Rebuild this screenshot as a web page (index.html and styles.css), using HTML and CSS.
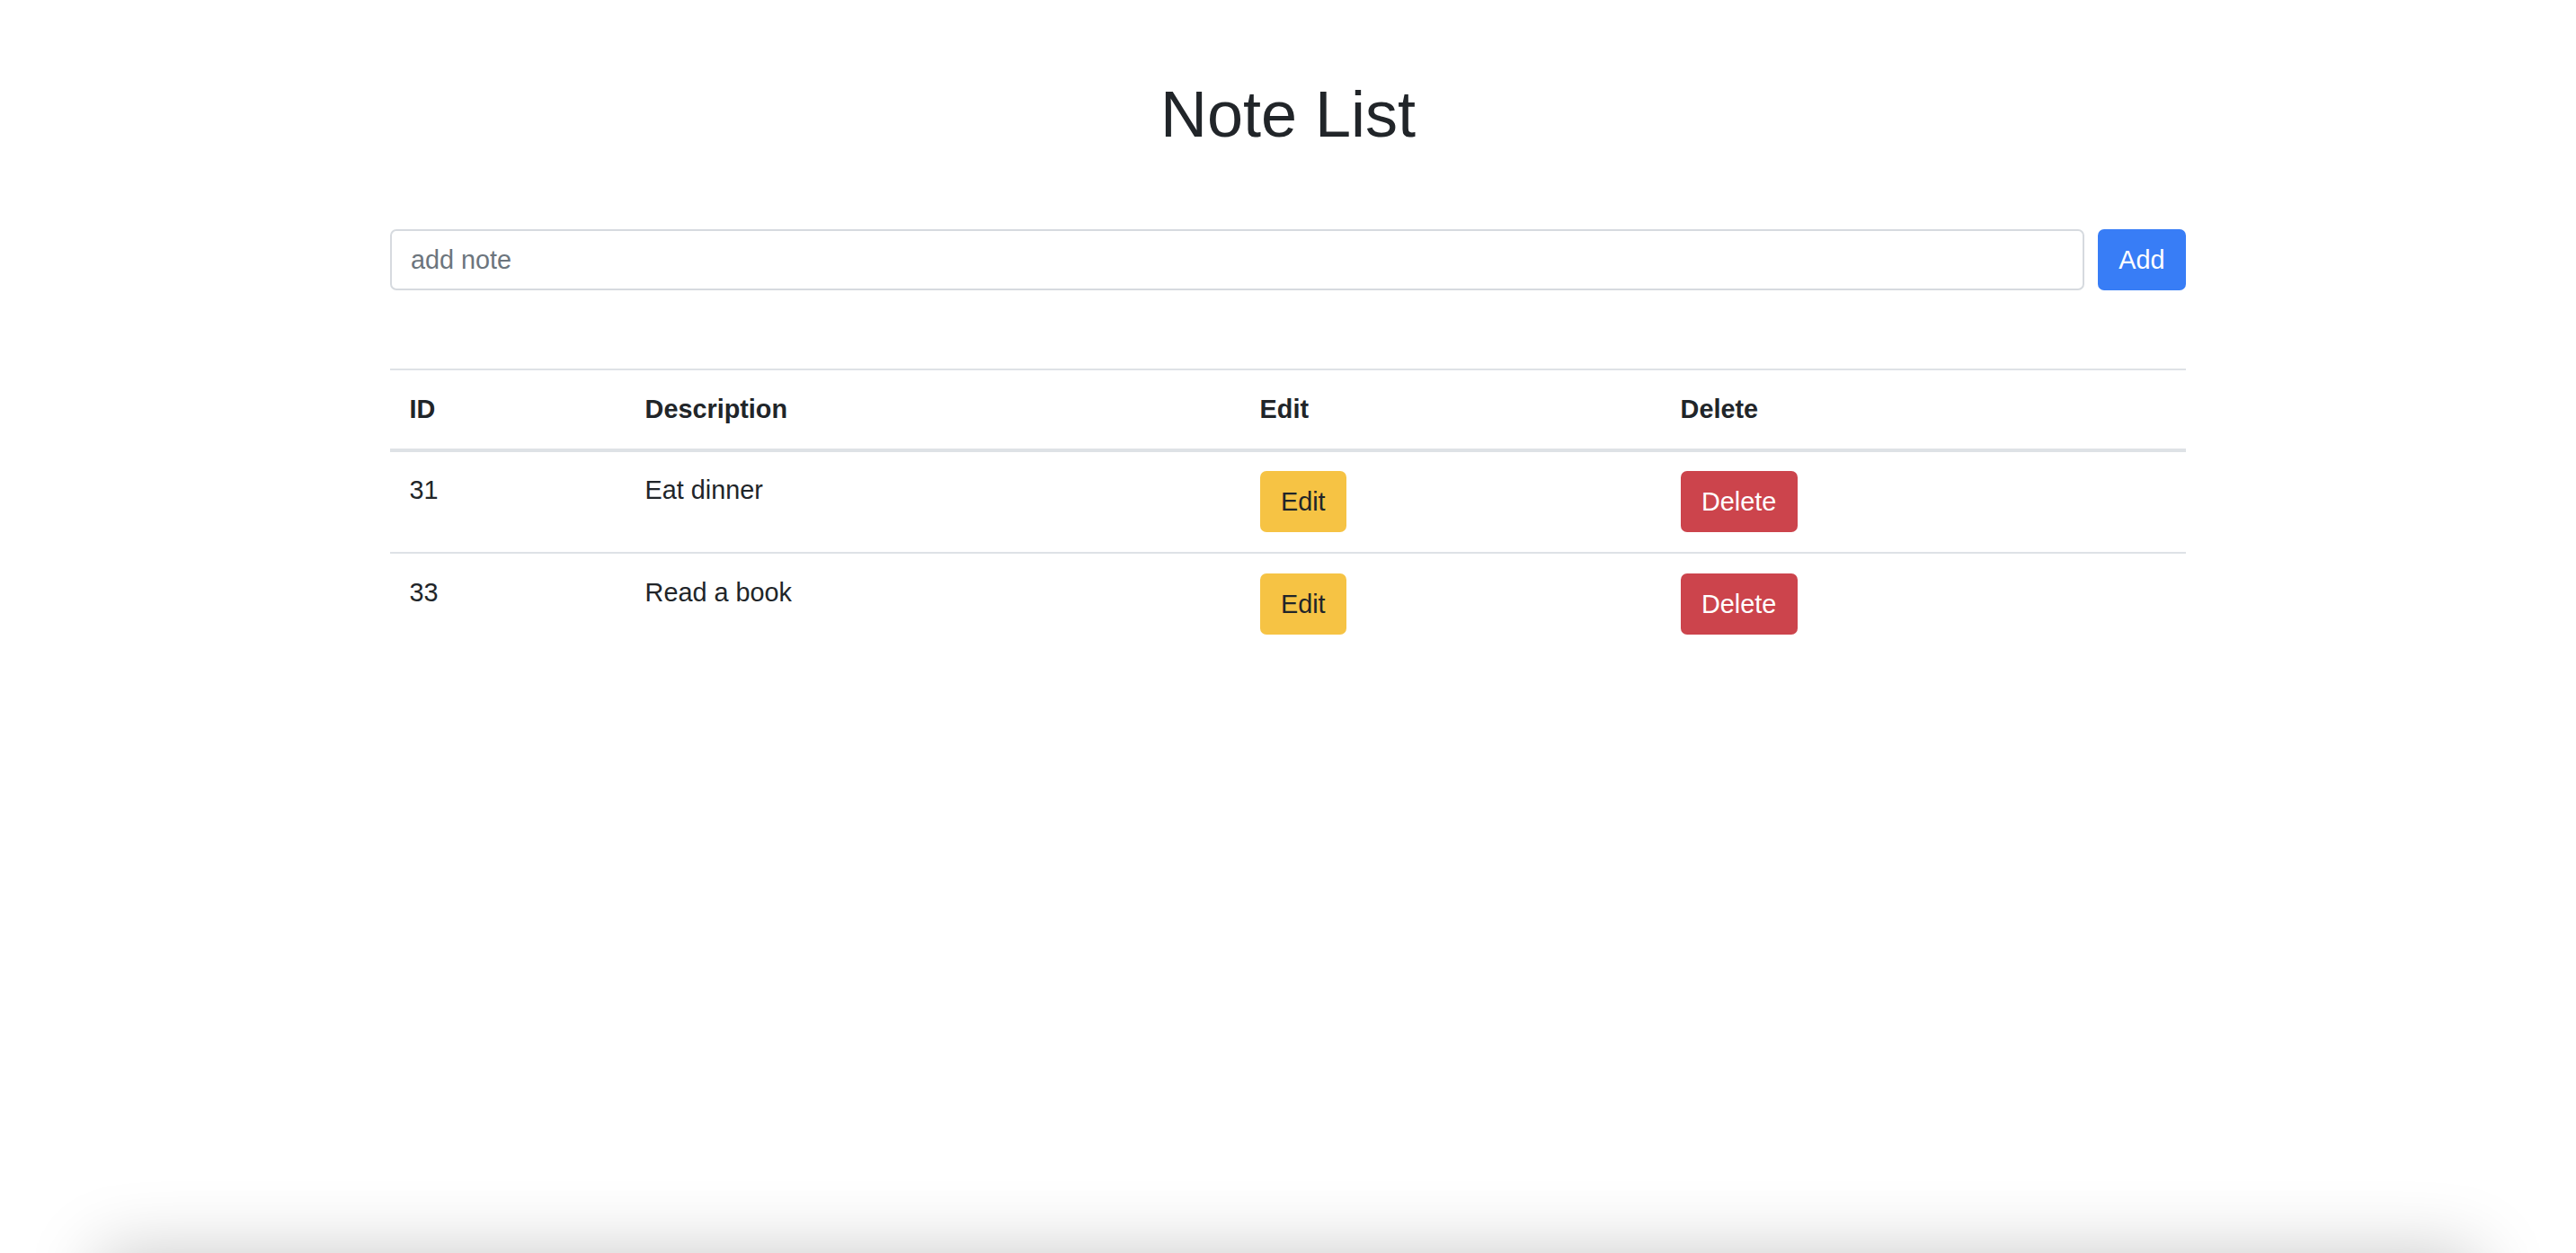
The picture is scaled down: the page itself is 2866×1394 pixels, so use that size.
FILE: index.html
```html
<!DOCTYPE html>
<html lang="en">
<head>
<meta charset="utf-8">
<title>Note List</title>
<link rel="stylesheet" href="styles.css">
</head>
<body>
<div class="page">
  <main class="container">
    <h1 class="title">Note List</h1>
    <form class="add-form">
      <input class="note-input" type="text" placeholder="add note">
      <button class="btn btn-primary" type="button">Add</button>
    </form>
    <table class="notes">
      <colgroup>
        <col class="col-id">
        <col class="col-desc">
        <col class="col-edit">
        <col class="col-del">
      </colgroup>
      <thead>
        <tr><th>ID</th><th>Description</th><th>Edit</th><th>Delete</th></tr>
      </thead>
      <tbody>
        <tr>
          <td>31</td>
          <td>Eat dinner</td>
          <td><button class="btn btn-warning" type="button">Edit</button></td>
          <td><button class="btn btn-danger" type="button">Delete</button></td>
        </tr>
        <tr>
          <td>33</td>
          <td>Read a book</td>
          <td><button class="btn btn-warning" type="button">Edit</button></td>
          <td><button class="btn btn-danger" type="button">Delete</button></td>
        </tr>
      </tbody>
    </table>
  </main>
</div>
<footer class="below-fold"></footer>
</body>
</html>
```

FILE: styles.css
```css
html, body {
  margin: 0;
  padding: 0;
  background: #ffffff;
}

body {
  font-family: "Liberation Sans", Arial, sans-serif;
  font-size: 28.8px;
  line-height: 1.5;
  color: #212529;
}

.page {
  min-height: 1394px;
}

.container {
  width: 1998px;
  margin: 0 auto;
  padding-top: 84px;
}

.title {
  margin: 0;
  font-size: 72px;
  line-height: 86.4px;
  font-weight: 400;
  text-align: center;
  color: #212529;
}

.add-form {
  display: flex;
  gap: 15px;
  margin: 85px 0 0;
}

.note-input {
  flex: 1;
  box-sizing: border-box;
  height: 68px;
  margin: 0;
  padding: 0 21px;
  border: 2px solid #d6dadf;
  border-radius: 7px;
  font-family: inherit;
  font-size: 28.8px;
  color: #495057;
  background: #fff;
  outline: none;
}

.note-input::placeholder {
  color: #6c757d;
  opacity: 1;
}

.btn {
  box-sizing: border-box;
  display: inline-block;
  height: 68px;
  margin: 0;
  padding: 0 23.4px;
  border: none;
  border-radius: 7px;
  font-family: inherit;
  font-size: 28.8px;
  line-height: 68px;
  vertical-align: top;
  cursor: pointer;
}

.btn-primary {
  background: #387df6;
  color: #ffffff;
}

.btn-warning {
  background: #f6c344;
  color: #212529;
}

.btn-danger {
  background: #cc444c;
  color: #ffffff;
}

.notes {
  width: 100%;
  margin-top: 87px;
  border-collapse: collapse;
  table-layout: fixed;
}

.col-id { width: 262px; }
.col-desc { width: 684px; }
.col-edit { width: 468px; }
.col-del { width: 584px; }

.notes th,
.notes td {
  padding: 21.6px;
  text-align: left;
  vertical-align: top;
  line-height: 43.2px;
  border-top: 2px solid #dee2e6;
}

.notes th {
  font-weight: 700;
  border-bottom: 4px solid #dee2e6;
}

.notes td .btn {
  margin-top: 0;
}

.below-fold {
  height: 200px;
  margin: 0 110px;
  background: #ffffff;
  box-shadow: 0 0 80px rgba(0, 0, 0, 0.22);
}
```
